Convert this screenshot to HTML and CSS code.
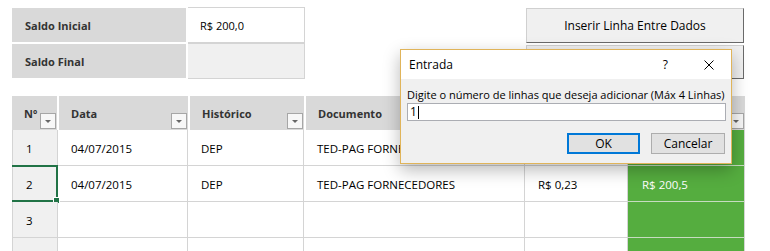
FILE: index.html
```html
<!DOCTYPE html>
<html lang="pt">
<head>
    <meta charset="UTF-8">
    <title>Controle de Saldo</title>
    <link rel="stylesheet" href="styles.css">
</head>
<body>
    <div class="sheet">
        <div class="top">
            <div class="summary">
                <div class="lbl">Saldo Inicial</div>
                <div class="val">R$ 200,0</div>
                <div class="lbl">Saldo Final</div>
                <div class="val val-alt"></div>
            </div>
            <div class="actions">
                <button class="macro">Inserir Linha Entre Dados</button>
                <button class="macro macro-low"></button>
            </div>
        </div>

        <div class="grid">
            <div class="thead">
                <div class="th">Nº<span class="filter"></span></div>
                <div class="th">Data<span class="filter"></span></div>
                <div class="th">Histórico<span class="filter"></span></div>
                <div class="th">Documento<span class="filter"></span></div>
                <div class="th"><span class="filter"></span></div>
                <div class="th"><span class="filter"></span></div>
            </div>
            <div class="row">
                <div class="td num">1</div>
                <div class="td">04/07/2015</div>
                <div class="td">DEP</div>
                <div class="td">TED-PAG FORNECEDORES</div>
                <div class="td"></div>
                <div class="td green"></div>
            </div>
            <div class="row">
                <div class="td num">2<span class="sel"><span class="handle"></span></span></div>
                <div class="td">04/07/2015</div>
                <div class="td">DEP</div>
                <div class="td">TED-PAG FORNECEDORES</div>
                <div class="td">R$ 0,23</div>
                <div class="td green">R$ 200,5</div>
            </div>
            <div class="row">
                <div class="td num">3</div>
                <div class="td"></div>
                <div class="td"></div>
                <div class="td"></div>
                <div class="td"></div>
                <div class="td green"></div>
            </div>
            <div class="row">
                <div class="td num"></div>
                <div class="td"></div>
                <div class="td"></div>
                <div class="td"></div>
                <div class="td"></div>
                <div class="td green"></div>
            </div>
        </div>
    </div>

    <div class="dialog">
        <div class="dialog-title">
            <span>Entrada</span>
            <span class="help">?</span>
            <svg class="close" width="10" height="10" viewBox="0 0 10 10">
                <path d="M0.5 0.5 L9.5 9.5 M9.5 0.5 L0.5 9.5" stroke="#000" stroke-width="1" fill="none"/>
            </svg>
        </div>
        <div class="dialog-body">
            <label for="linhas">Digite o número de linhas que deseja adicionar (Máx 4 Linhas)</label>
            <div class="input">1<span class="caret"></span></div>
            <div class="dialog-buttons">
                <button class="btn btn-ok">OK</button>
                <button class="btn">Cancelar</button>
            </div>
        </div>
    </div>
</body>
</html>
```

FILE: styles.css
```css
html {
    overflow: hidden;
}
body {
    margin: 0;
    background: #fff;
    font-family: "Open Sans", Arial, sans-serif;
    font-size: 12px;
    color: #000;
    height: 251px;
    overflow: hidden;
    position: relative;
}
.sheet {
    padding: 8px 0 0 12px;
    width: 733px;
}
.top {
    display: flex;
    justify-content: space-between;
}
.summary {
    display: grid;
    grid-template-columns: 174px 117px;
    grid-template-rows: 34px 34px;
    gap: 2px;
}
.lbl {
    background: #d9d9d9;
    font-weight: bold;
    color: #333;
    font-size: 11px;
    display: flex;
    align-items: center;
    padding-left: 13px;
}
.val {
    border: 1px solid #d4d4d4;
    border-left: none;
    margin: -1px 0;
    display: flex;
    align-items: center;
    padding-left: 12px;
    font-size: 11px;
}
.val-alt {
    background: #f0f0f0;
}
.actions {
    display: flex;
    flex-direction: column;
    gap: 2px;
    width: 218px;
    margin-right: 1px;
}
.macro {
    height: 35px;
    background: #f0f0f0;
    border: 1px solid #d0d0d0;
    border-right: 1px solid #6a6a6a;
    border-bottom: 1px solid #6a6a6a;
    font-family: "Open Sans", Arial, sans-serif;
    font-size: 12px;
    color: #000;
    padding: 0;
}
.macro-low {
    height: 34px;
}
.grid {
    margin-top: 17px;
    height: 155px;
    overflow: hidden;
}
.thead {
    display: grid;
    grid-template-columns: 45px 129px 114px 218px 100px 117px;
    gap: 2px;
    height: 34px;
}
.th {
    position: relative;
    background: #d9d9d9;
    font-weight: bold;
    font-size: 11px;
    color: #333;
    display: flex;
    align-items: center;
    padding-left: 12px;
}
.filter {
    position: absolute;
    right: 1px;
    bottom: 1px;
    width: 14px;
    height: 14px;
    background: #f7f7f7;
    border: 1px solid #a6a6a6;
}
.filter::after {
    content: '';
    position: absolute;
    left: 4px;
    top: 6px;
    border-left: 3px solid transparent;
    border-right: 3px solid transparent;
    border-top: 3px solid #666;
}
.row {
    display: grid;
    grid-template-columns: 46px 130px 116px 221px 103px 117px;
    height: 36px;
}
.td {
    border-right: 1px solid #d4d4d4;
    border-bottom: 1px solid #d4d4d4;
    display: flex;
    align-items: center;
    padding: 1px 0 0 13px;
    font-size: 11.5px;
}
.num {
    background: #f0f0f0;
    border-left: 1px solid #d4d4d4;
    position: relative;
}
.green {
    background: #55ad3f;
    color: #fff;
    padding-left: 14px;
    border-bottom-color: #c6dcc0;
}
.sel {
    position: absolute;
    top: -1px;
    left: -3px;
    right: -1px;
    bottom: -1px;
    border: 2px solid #217346;
}
.handle {
    position: absolute;
    right: -4px;
    bottom: -4px;
    width: 5px;
    height: 5px;
    background: #217346;
    border: 1px solid #fff;
}
.dialog {
    position: absolute;
    left: 400px;
    top: 49px;
    width: 330px;
    height: 113px;
    border: 1px solid #e0b45a;
    background: #f0f0f0;
    box-shadow: 0 6px 16px rgba(0, 0, 0, 0.28);
}
.dialog-title {
    height: 29px;
    background: #fff;
    display: flex;
    align-items: center;
    padding-left: 8px;
    font-size: 12px;
}
.help {
    margin-left: auto;
    margin-right: 36px;
    font-size: 12px;
}
.close {
    margin-right: 17px;
}
.dialog-body {
    padding: 8px 5px 0 6px;
    font-size: 11px;
}
.dialog-body label {
    display: block;
    line-height: 16px;
    white-space: nowrap;
}
.input {
    margin-top: 0;
    height: 16px;
    background: #fff;
    border: 1px solid #abadb3;
    line-height: 16px;
    padding-left: 2px;
    font-size: 12px;
    display: flex;
    align-items: center;
}
.caret {
    display: inline-block;
    width: 1px;
    height: 13px;
    background: #000;
    margin-left: 1px;
}
.dialog-buttons {
    display: flex;
    justify-content: flex-end;
    gap: 11px;
    margin-top: 12px;
    padding-right: 1px;
}
.btn {
    width: 74px;
    height: 21px;
    background: #e1e1e1;
    border: 1px solid #adadad;
    font-family: "Open Sans", Arial, sans-serif;
    font-size: 12px;
    color: #000;
    padding: 0;
}
.btn-ok {
    width: 73px;
    border: 2px solid #0078d7;
}
```
